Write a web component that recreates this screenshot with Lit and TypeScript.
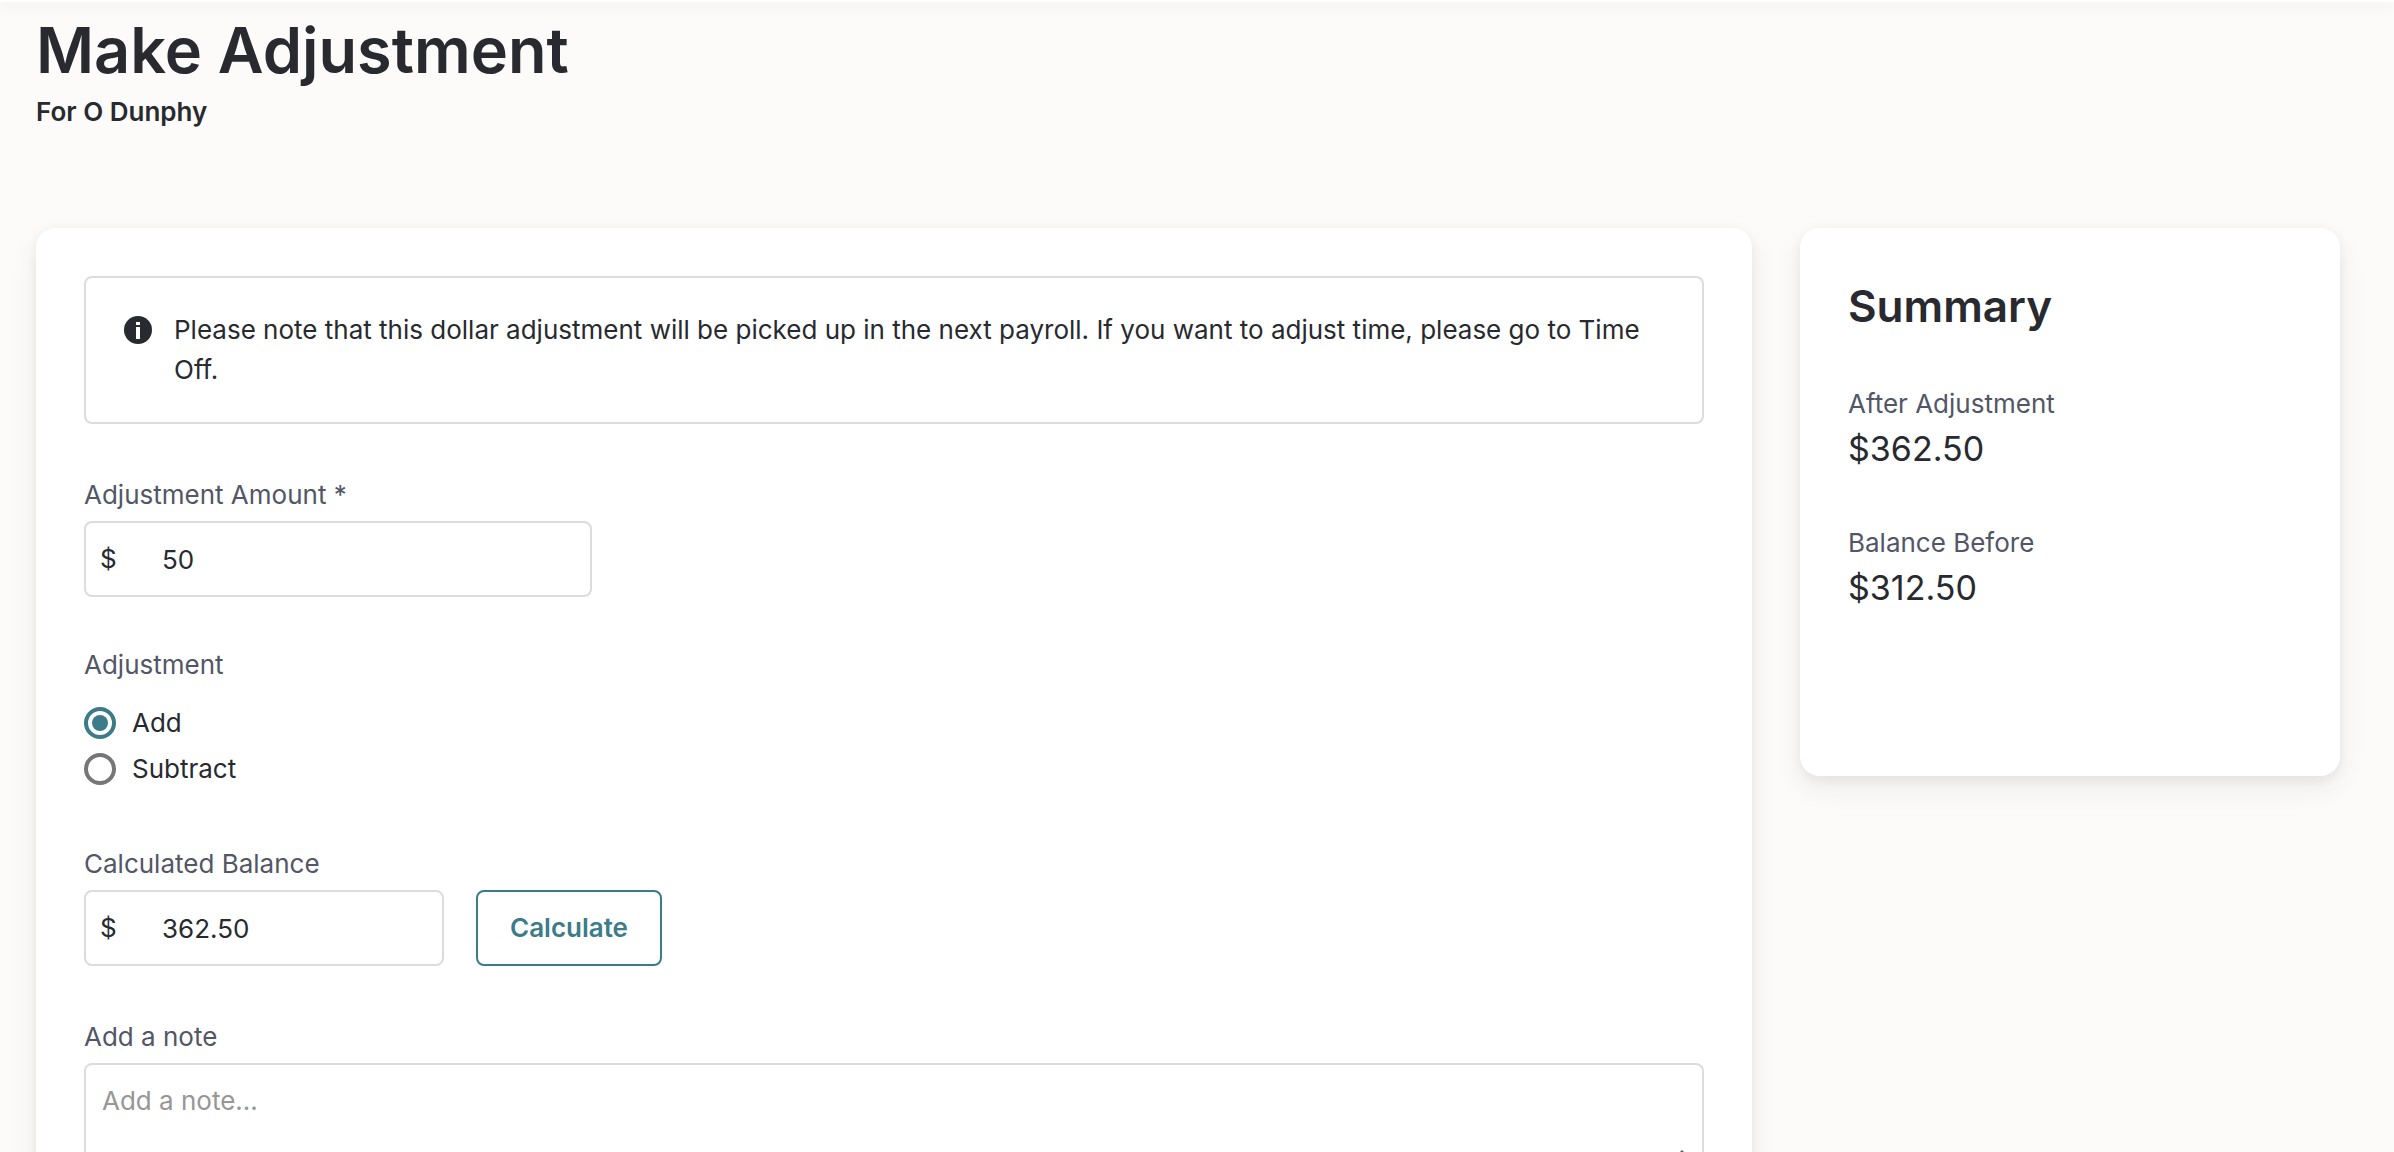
import { LitElement, html, css } from "lit";
import { customElement, state } from "lit/decorators.js";

const money = (n: number) => n.toFixed(2);

@customElement("app-root")
export class AppRoot extends LitElement {
  static styles = css`
    :host {
      --ink: #282a30;
      --muted: #525666;
      --line: #dcdcdc;
      --teal: #3b7c88;
      display: block;
      box-sizing: border-box;
      height: 100vh;
      overflow-y: auto;
      scrollbar-width: none;
      background: #fcfbf9;
      color: var(--ink);
      font: 400 26px/36px Inter, "Liberation Sans", sans-serif;
    }
    * {
      box-sizing: border-box;
    }
    h1,
    h2,
    p,
    dl,
    dd,
    fieldset {
      margin: 0;
      padding: 0;
      border: 0;
    }
    input,
    textarea,
    button {
      font: inherit;
      color: inherit;
    }
    .topbar {
      height: 2px;
      background: #fff;
      box-shadow: 0 2px 14px rgba(0, 0, 0, 0.16);
    }
    .page {
      padding: 16px 54px 48px 36px;
    }
    .title {
      font-size: 63px;
      font-weight: 600;
      line-height: 64px;
    }
    .subtitle {
      margin-top: 10px;
      font-weight: 600;
      line-height: 40px;
    }
    .columns {
      display: grid;
      grid-template-columns: minmax(0, 143fr) minmax(0, 45fr);
      gap: 48px;
      align-items: start;
      margin-top: 96px;
    }
    .card {
      padding: 48px;
      border-radius: 20px;
      background: #fff;
      box-shadow: 0 12px 28px rgba(40, 42, 48, 0.07), 0 4px 12px rgba(40, 42, 48, 0.06);
    }
    .alert {
      display: flex;
      gap: 22px;
      margin-bottom: 53px;
      padding: 32px 38px;
      border: 2px solid var(--line);
      border-radius: 8px;
      line-height: 40px;
    }
    .alert-icon {
      flex: none;
      width: 28px;
      height: 28px;
      margin-top: 6px;
    }
    .field {
      margin-bottom: 53px;
    }
    .field-amount {
      margin-bottom: 50px;
    }
    .field-choice {
      margin-bottom: 54px;
    }
    .label {
      display: block;
      width: fit-content;
      margin-bottom: 8px;
      padding: 0;
      color: var(--muted);
    }
    .field-choice .label {
      margin-bottom: 17px;
    }
    .row {
      display: flex;
      gap: 32px;
    }
    .money {
      display: flex;
      align-items: center;
      height: 76px;
      border: 2px solid var(--line);
      border-radius: 8px;
      background: #fff;
      overflow: hidden;
    }
    .money:focus-within,
    .note:focus {
      border-color: var(--teal);
    }
    .money-wide {
      max-width: 508px;
    }
    .money-narrow {
      width: 360px;
    }
    .prefix {
      flex: none;
      width: 76px;
      padding-left: 14px;
    }
    .money-input {
      flex: 1;
      min-width: 0;
      height: 100%;
      padding: 0 14px 0 0;
      border: 0;
      outline: 0;
      background: none;
    }
    .choice {
      display: flex;
      align-items: center;
      gap: 16px;
      width: fit-content;
      height: 46px;
    }
    .radio {
      display: grid;
      place-content: center;
      appearance: none;
      width: 32px;
      height: 32px;
      margin: 0;
      border: 4px solid #767676;
      border-radius: 50%;
      background: #fff;
    }
    .radio:checked {
      border-color: var(--teal);
    }
    .radio:checked::before {
      content: "";
      width: 16px;
      height: 16px;
      border-radius: 50%;
      background: var(--teal);
    }
    .button {
      padding: 0 32px;
      border: 2px solid var(--teal);
      border-radius: 8px;
      background: #fff;
      color: var(--teal);
      font-weight: 600;
      cursor: pointer;
    }
    .note-box {
      position: relative;
    }
    .note {
      display: block;
      width: 100%;
      height: 124px;
      padding: 18px 16px;
      border: 2px solid var(--line);
      border-radius: 8px;
      outline: 0;
      background: #fff;
      resize: none;
    }
    .note::placeholder {
      color: #969696;
      opacity: 1;
    }
    .grip {
      position: absolute;
      right: 19px;
      bottom: 18px;
      width: 20px;
      height: 20px;
      pointer-events: none;
    }
    .summary {
      min-height: 548px;
    }
    .summary-title {
      margin-bottom: 50px;
      font-size: 44px;
      font-weight: 600;
      line-height: 60px;
    }
    .figure {
      margin-bottom: 53px;
    }
    .figure-name {
      color: var(--muted);
    }
    .figure-value {
      margin-top: 4px;
      font-size: 34px;
      line-height: 46px;
    }
  `;

  @state() private amount = "50";
  @state() private mode: "add" | "subtract" = "add";
  @state() private balance = 362.5;
  private readonly before = 312.5;

  private calculate() {
    const value = Number(this.amount) || 0;
    this.balance = this.before + (this.mode === "add" ? value : -value);
  }

  private choice(mode: "add" | "subtract", text: string) {
    return html`
      <label class="choice">
        <input
          class="radio"
          type="radio"
          name="adjustment"
          value=${mode}
          .checked=${this.mode === mode}
          @change=${() => (this.mode = mode)}
        />
        <span>${text}</span>
      </label>
    `;
  }

  private figure(name: string, value: number) {
    return html`
      <div class="figure">
        <dt class="figure-name">${name}</dt>
        <dd class="figure-value">$${money(value)}</dd>
      </div>
    `;
  }

  render() {
    return html`
      <div class="topbar"></div>
      <main class="page">
        <h1 class="title">Make Adjustment</h1>
        <p class="subtitle">For O Dunphy</p>
        <div class="columns">
          <form class="card" @submit=${(e: Event) => e.preventDefault()}>
            <div class="alert">
              <svg class="alert-icon" viewBox="0 0 28 28" aria-hidden="true">
                <circle cx="14" cy="14" r="14" fill="#282a30" />
                <path d="M12 6h4v3h-4zM12 11h4v12h-4z" fill="#fff" />
              </svg>
              <p>
                Please note that this dollar adjustment will be picked up in the next payroll. If you
                want to adjust time, please go to Time Off.
              </p>
            </div>

            <div class="field field-amount">
              <label class="label" for="amount">Adjustment Amount *</label>
              <div class="money money-wide">
                <span class="prefix">$</span>
                <input
                  class="money-input"
                  id="amount"
                  type="text"
                  inputmode="decimal"
                  required
                  .value=${this.amount}
                  @input=${(e: Event) => (this.amount = (e.target as HTMLInputElement).value)}
                />
              </div>
            </div>

            <fieldset class="field field-choice">
              <legend class="label">Adjustment</legend>
              ${this.choice("add", "Add")} ${this.choice("subtract", "Subtract")}
            </fieldset>

            <div class="field">
              <label class="label" for="balance">Calculated Balance</label>
              <div class="row">
                <div class="money money-narrow">
                  <span class="prefix">$</span>
                  <input class="money-input" id="balance" type="text" .value=${money(this.balance)} />
                </div>
                <button class="button" type="button" @click=${this.calculate}>Calculate</button>
              </div>
            </div>

            <div class="field">
              <label class="label" for="note">Add a note</label>
              <div class="note-box">
                <textarea class="note" id="note" placeholder="Add a note..."></textarea>
                <svg class="grip" viewBox="0 0 20 20" aria-hidden="true">
                  <path d="M18 2L2 18M18 11l-7 7" fill="none" stroke="#5f5f5f" stroke-width="3" />
                </svg>
              </div>
            </div>
          </form>

          <aside class="card summary">
            <h2 class="summary-title">Summary</h2>
            <dl>
              ${this.figure("After Adjustment", this.balance)}
              ${this.figure("Balance Before", this.before)}
            </dl>
          </aside>
        </div>
      </main>
    `;
  }
}
